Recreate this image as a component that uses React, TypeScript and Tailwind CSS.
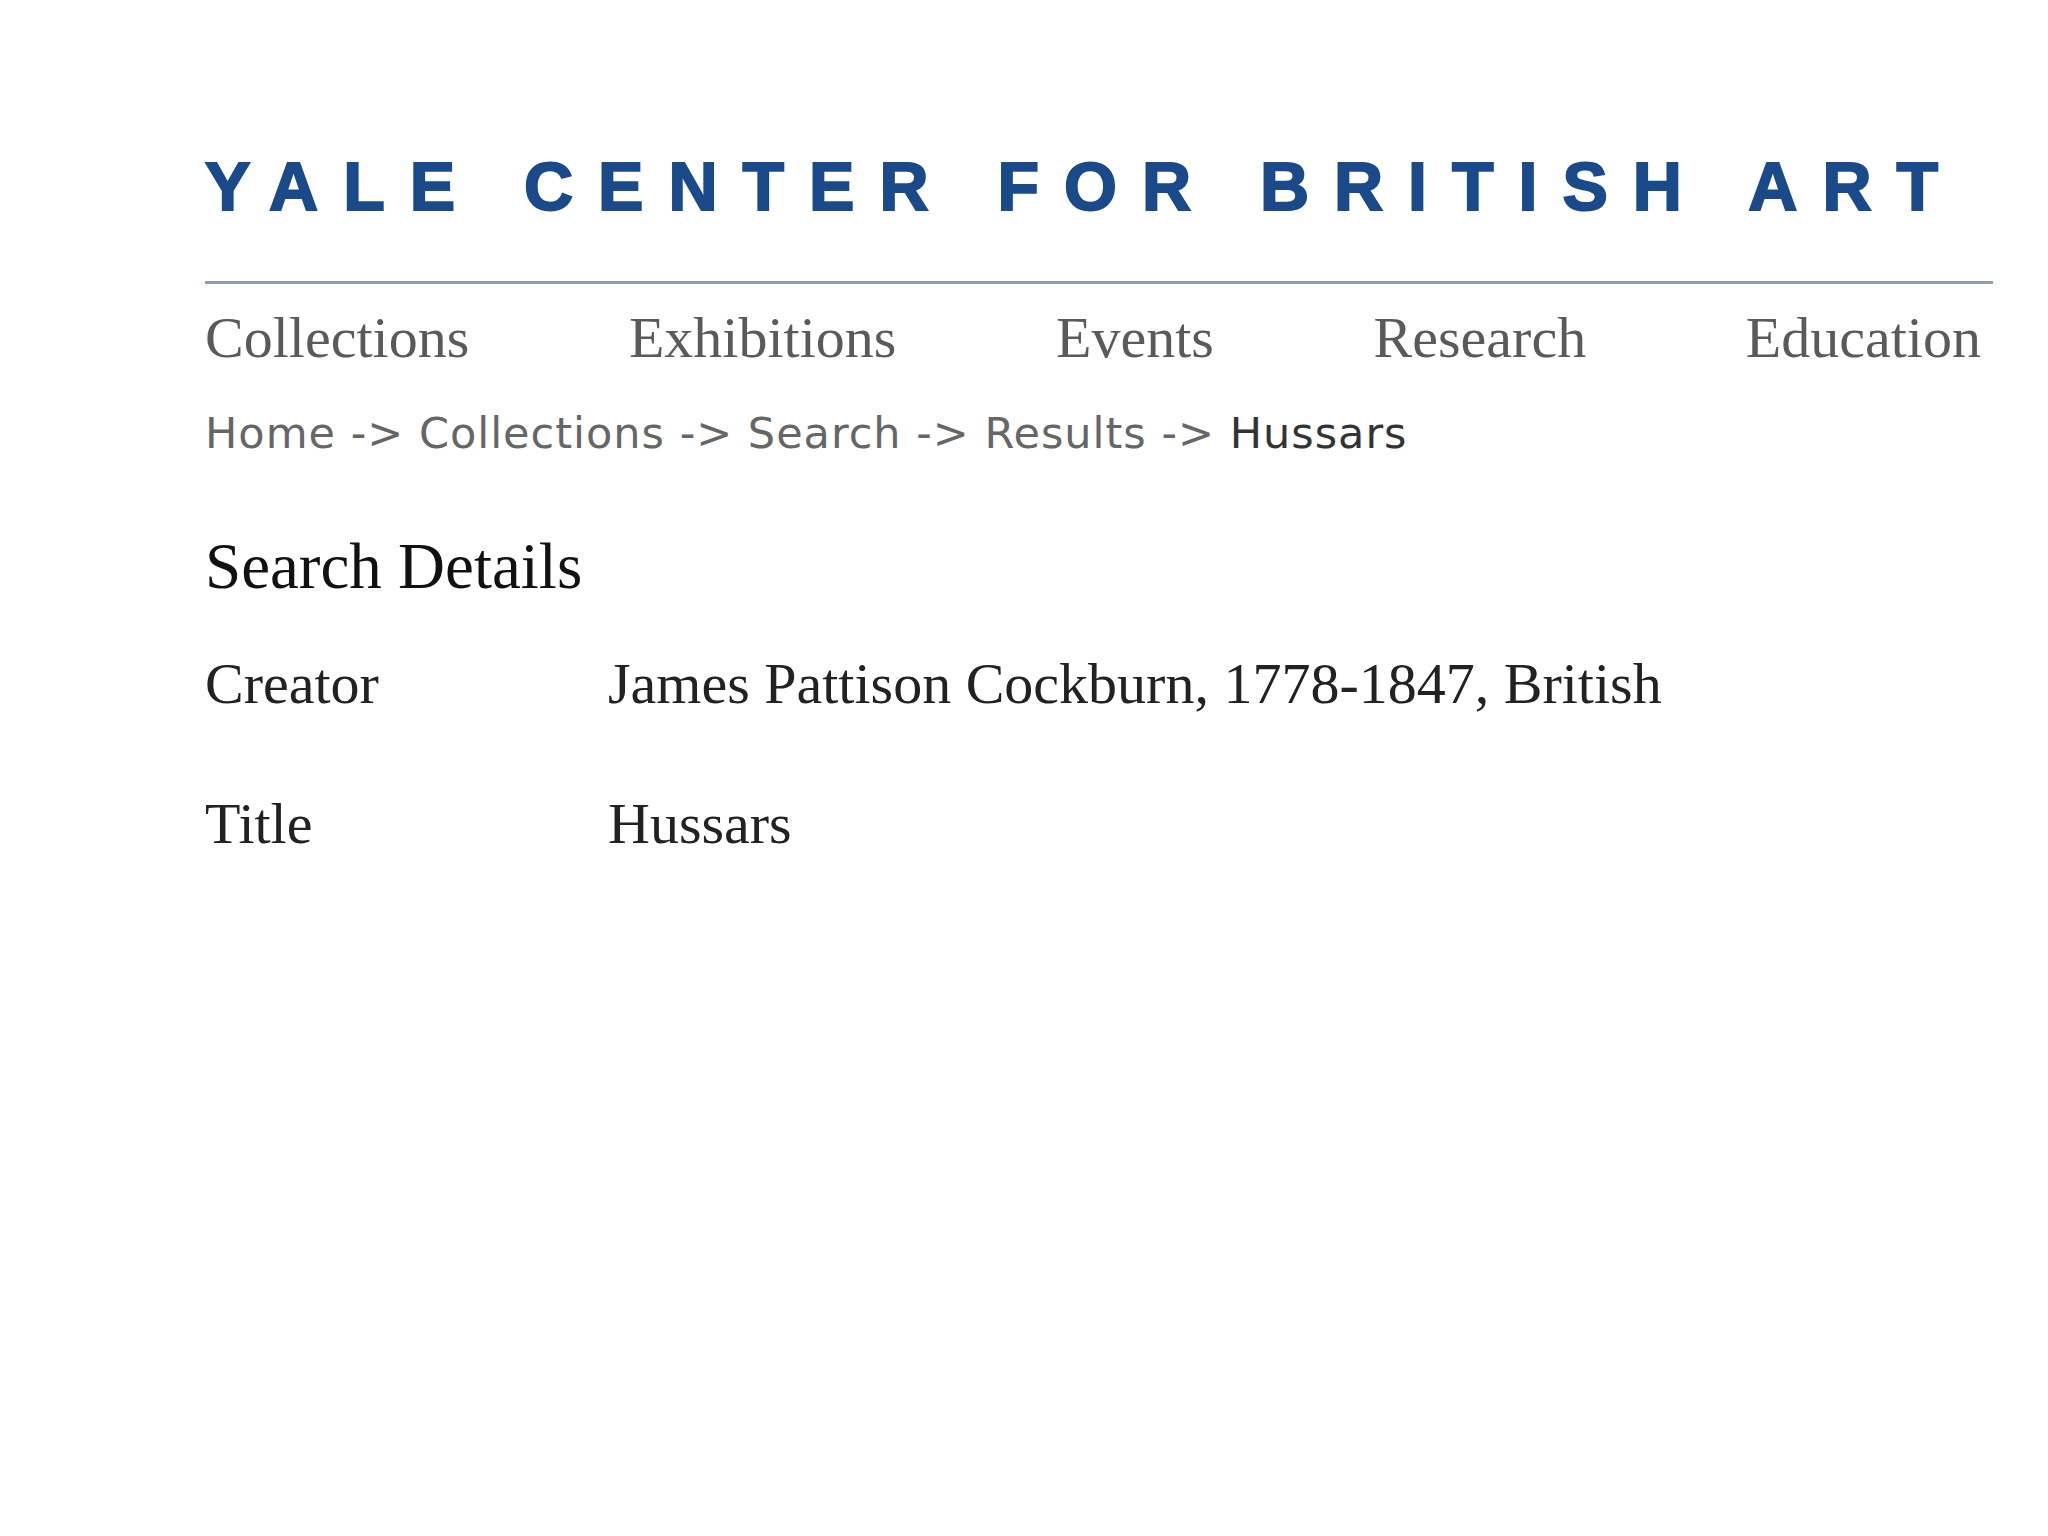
import React from "react";

export default function App() {
  const crumbs = ["Home", "Collections", "Search", "Results"];
  const nav = ["Collections", "Exhibitions", "Events", "Research", "Education"];
  return (
    <div className="min-h-[1536px] w-[2048px] bg-white pl-[205px]">
      <h1
        className="mt-0 pt-[152px] text-[68px] leading-[68px] font-bold tracking-[25px] text-[#1a4a8a] whitespace-nowrap [-webkit-text-stroke:2px_#1a4a8a]"
        style={{ fontFamily: '"Liberation Sans", Arial, sans-serif' }}
      >
        YALE CENTER FOR BRITISH ART
      </h1>
      <div className="mt-[61px] h-[3px] w-[1788px] bg-[#8e9bb0]" />
      <nav
        className="mt-[25px] flex w-[1776px] justify-between text-[58px] leading-[58px] text-[#5a5a5a]"
        style={{ fontFamily: '"Liberation Serif", "Times New Roman", serif' }}
      >
        {nav.map((n) => (
          <span key={n}>{n}</span>
        ))}
      </nav>
      <div
        className="mt-[45px] text-[43px] leading-[43px] tracking-[1px] text-[#666666] whitespace-nowrap"
        style={{ fontFamily: '"DejaVu Sans", Verdana, sans-serif' }}
      >
        {crumbs.map((c) => (
          <span key={c}>
            {c} -&gt;{" "}
          </span>
        ))}
        <span className="text-[#333333]">Hussars</span>
      </div>
      <div style={{ fontFamily: '"Liberation Serif", "Times New Roman", serif' }}>
        <h2 className="mt-[79px] text-[65px] leading-[65px] text-[#111111]">Search Details</h2>
        <div className="mt-[56px] flex flex-col gap-[82px] text-[58px] leading-[58px] text-[#222222]">
          <div className="flex">
            <div className="w-[403px]">Creator</div>
            <div>James Pattison Cockburn, 1778-1847, British</div>
          </div>
          <div className="flex">
            <div className="w-[403px]">Title</div>
            <div>Hussars</div>
          </div>
        </div>
      </div>
    </div>
  );
}
